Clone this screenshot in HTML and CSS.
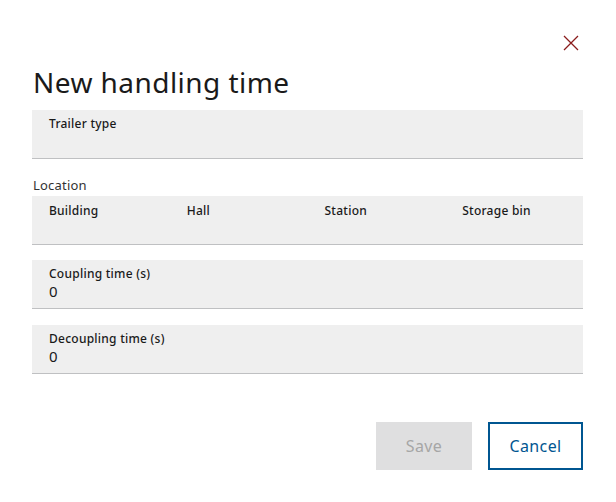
FILE: index.html
```html
<!DOCTYPE html>
<html>
<head>
    <title>New handling time</title>
    <link rel="stylesheet" href="styles.css">
</head>
<body>
    <div class="dialog">
        <div class="dialog-top">
            <button class="close" aria-label="Close">
                <svg width="16" height="16" viewBox="0 0 16 16"><path d="M1 1 L15 15 M15 1 L1 15" stroke="#8a1c1c" stroke-width="1.3" fill="none"/></svg>
            </button>
        </div>
        <h1>New handling time</h1>

        <div class="field">
            <label>Trailer type</label>
            <div class="value"></div>
        </div>

        <div class="group-label">Location</div>
        <div class="field row">
            <div class="cell"><label>Building</label></div>
            <div class="cell"><label>Hall</label></div>
            <div class="cell"><label>Station</label></div>
            <div class="cell"><label>Storage bin</label></div>
        </div>

        <div class="field spaced">
            <label>Coupling time (s)</label>
            <div class="value">0</div>
        </div>

        <div class="field spaced last">
            <label>Decoupling time (s)</label>
            <div class="value">0</div>
        </div>

        <div class="actions">
            <button class="btn save" disabled>Save</button>
            <button class="btn cancel">Cancel</button>
        </div>
    </div>
</body>
</html>
```

FILE: styles.css
```css
body { margin: 0; font-family: "Noto Sans", Arial, sans-serif; color: #1a1a1a; background: #fff; }
.dialog { width: 616px; height: 502px; box-sizing: border-box; padding: 35px 33px 0 32px; }
.dialog-top { display: flex; justify-content: flex-end; height: 18px; }
.close { background: none; border: none; padding: 0; margin-right: 4px; width: 16px; height: 16px; cursor: pointer; }
.close svg { display: block; }
h1 { font-size: 28px; font-weight: 400; margin: 9px 0 0 1px; line-height: 40px; letter-spacing: 0.45px; }
.field { background: #efefef; border-bottom: 1px solid #bfc0c2; height: 49px; box-sizing: border-box; padding: 6px 17px 0; margin-top: 8px; }
.field label { display: block; font-size: 12px; font-weight: 500; line-height: 16px; letter-spacing: 0.25px; }
.value { font-size: 15px; line-height: 18px; }
.group-label { font-size: 13px; margin: 17px 0 0 1px; line-height: 18px; color: #333; letter-spacing: 0.2px; }
.row { display: grid; grid-template-columns: repeat(4, 1fr); padding: 7px 0 0; margin-top: 2px; }
.cell { padding-left: 17px; }
.spaced { margin-top: 15px; }
.last { margin-top: 16px; }
.actions { display: flex; justify-content: flex-end; gap: 16px; margin-top: 48px; }
.btn { height: 48px; font-family: inherit; font-size: 16px; letter-spacing: 0.4px; box-sizing: border-box; }
.save { width: 96px; background: #dfdfe0; color: #a6a6a6; border: none; }
.cancel { width: 95px; background: #fff; color: #005691; border: 2px solid #005691; cursor: pointer; }
```
